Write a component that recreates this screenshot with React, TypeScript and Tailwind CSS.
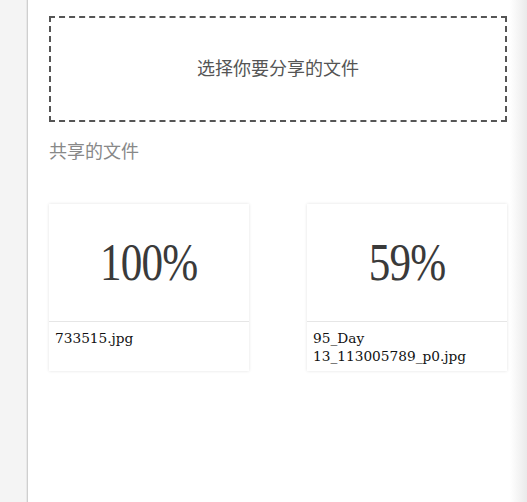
import React from 'react';

const files = [
  { name: '733515.jpg', percent: 100 },
  { name: '95_Day 13_113005789_p0.jpg', percent: 59 },
];

function FileCard({ name, percent }: { name: string; percent: number }) {
  return (
    <div className="w-[200px] h-[167px] shrink-0 bg-white shadow-[0_0_3px_rgba(0,0,0,0.12)] flex flex-col">
      <div className="h-[118px] flex items-center justify-center border-b border-[#e6e6e6]">
        <span className="inline-block scale-x-[0.83] text-[52px] leading-none text-[#3a3a3a] font-['Liberation_Serif',serif] tracking-[-1px]">
          {percent}%
        </span>
      </div>
      <div className="px-[6px] pt-[7px] text-[13.7px] leading-[18px] text-[#111] font-['DejaVu_Serif',serif] break-words">
        {name}
      </div>
    </div>
  );
}

export default function App() {
  return (
    <div className="flex w-[527px] h-[502px] bg-white overflow-hidden">
      {/* sidebar strip */}
      <div className="w-[26px] shrink-0 bg-[#f4f4f4]" />
      <div className="w-[1px] shrink-0 bg-[#e8e8e8]" />
      <div className="w-[1px] shrink-0 bg-[#cfcfcf]" />
      {/* main */}
      <div className="flex-1 pl-[21px] pt-[16px] font-['Noto_Sans_CJK_SC',sans-serif]">
        <div className="w-[458px] h-[106px] border-2 border-dashed border-[#555] flex items-center justify-center pb-[4px]">
          <span className="text-[18px] text-[#555]">选择你要分享的文件</span>
        </div>
        <div className="mt-[16px] text-[18px] leading-[24px] text-[#888]">共享的文件</div>
        <div className="mt-[42px] flex gap-[58px]">
          {files.map((f) => (
            <FileCard key={f.name} name={f.name} percent={f.percent} />
          ))}
        </div>
      </div>
      {/* right edge shadow */}
      <div className="w-[17px] shrink-0 bg-gradient-to-r from-white to-[#eaeaea]" />
    </div>
  );
}
